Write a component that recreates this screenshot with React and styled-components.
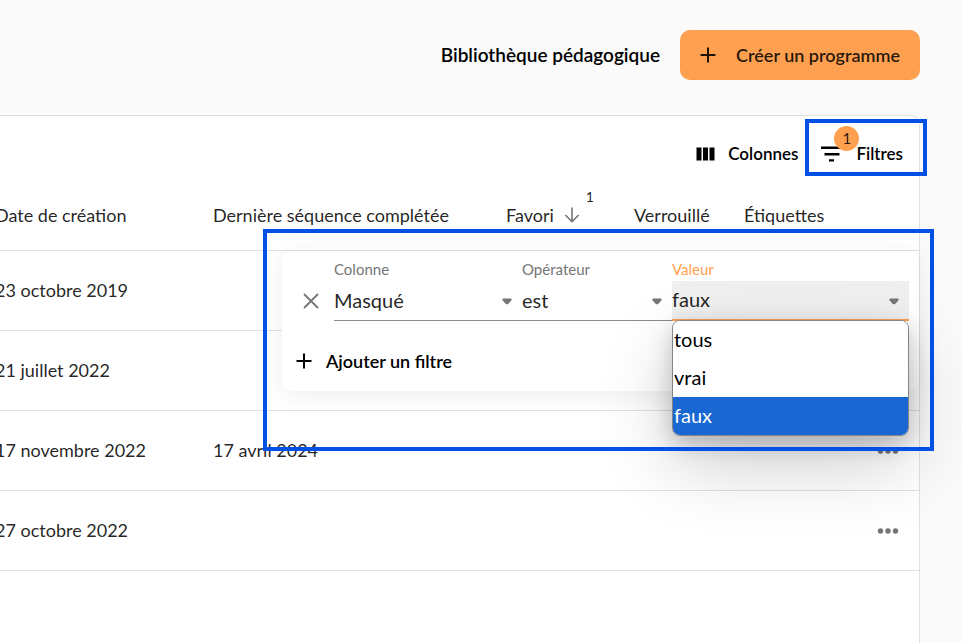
import React, { useState } from "react";
import styled, { createGlobalStyle, css } from "styled-components";

const GlobalStyle = createGlobalStyle`
  * {
    box-sizing: border-box;
  }
  body {
    margin: 0;
    background: #fafafa;
    color: rgba(0, 0, 0, 0.87);
    font-family: Avenir, Lato, "Open Sans", sans-serif;
    font-size: 18px;
    line-height: 24px;
    overflow-x: hidden;
  }
  button,
  select {
    font: inherit;
    color: inherit;
  }
`;

const Page = styled.div`
  display: flex;
  flex-direction: column;
  min-height: 100vh;
  padding: 30px 42px 0 0;
  overflow: hidden;
`;

const TopBar = styled.header`
  display: flex;
  justify-content: flex-end;
  align-items: center;
  gap: 20px;
  margin-bottom: 35px;
`;

const LibraryLink = styled.a`
  color: #000;
  font-size: 19px;
  font-weight: 600;
  text-decoration: none;
`;

const CreateButton = styled.button`
  display: flex;
  align-items: center;
  gap: 20px;
  height: 50px;
  padding: 0 20px 1px;
  border: 0;
  border-radius: 10px;
  background: #ffa050;
  color: rgba(0, 0, 0, 0.87);
  font-weight: 600;
`;

const Card = styled.main`
  flex: 1;
  margin-left: -18px;
  border: 1px solid #e0e0e0;
  border-bottom: 0;
  border-radius: 10px 10px 0 0;
  background: #fff;
`;

const Toolbar = styled.div`
  display: flex;
  justify-content: flex-end;
  gap: 22px;
  height: 66px;
  padding: 16px 16px 0 0;
`;

const ToolButton = styled.button`
  position: relative;
  display: flex;
  align-items: center;
  gap: 13px;
  height: 44px;
  padding: 0 0 1px;
  border: 0;
  background: none;
  color: #000;
  font-size: 17px;
  font-weight: 600;
`;

const Badge = styled.span`
  position: absolute;
  top: -6px;
  left: 14px;
  width: 25px;
  height: 25px;
  border-radius: 50%;
  background: #ffa050;
  color: rgba(0, 0, 0, 0.87);
  font-size: 15px;
  font-weight: 400;
  line-height: 25px;
  text-align: center;
`;

const Highlight = styled.span`
  position: absolute;
  inset: ${({ $inset }) => $inset};
  z-index: 3;
  border: 4px solid #0050e6;
  pointer-events: none;
`;

const GridBody = styled.div`
  position: relative;
`;

const Table = styled.table`
  width: 100%;
  table-layout: fixed;
  border-collapse: separate;
  border-spacing: 0;
`;

const cell = css`
  padding: 0 12px 2px;
  border-bottom: 1px solid #e0e0e0;
  font-weight: 400;
  text-align: left;
  white-space: nowrap;
`;

const HeadCell = styled.th`
  ${cell}
  height: 69px;
  width: ${({ $width }) => $width || "auto"};
`;

const Cell = styled.td`
  ${cell}
  height: 80px;
`;

const SortLabel = styled.span`
  display: flex;
  align-items: center;
  gap: 9px;
`;

const SortIndex = styled.sup`
  align-self: flex-start;
  margin: -16px 0 0 -4px;
  font-size: 14px;
  line-height: 20px;
`;

const MoreButton = styled.button`
  display: flex;
  padding: 2px 4px 0;
  border: 0;
  background: none;
  color: #757575;
`;

const FilterPanel = styled.section`
  position: absolute;
  top: 69px;
  right: 0;
  z-index: 1;
  width: 637px;
  height: 140px;
  padding: 8px 10px 0 14px;
  border-radius: 10px;
  background: #fff;
  box-shadow: 0 4px 24px rgba(0, 0, 0, 0.07);
`;

const FilterRow = styled.div`
  display: grid;
  grid-template-columns: 38px 188px 150px 1fr;
  align-items: end;
`;

const RemoveButton = styled.button`
  display: flex;
  align-items: center;
  height: 40px;
  padding: 0 0 0 7px;
  border: 0;
  background: none;
  color: #757575;
`;

const Field = styled.div`
  position: relative;
  display: flex;
  flex-direction: column;
`;

const FieldLabel = styled.label`
  height: 22px;
  color: ${({ $focused }) => ($focused ? "#ffa050" : "#757575")};
  font-size: 15px;
  line-height: 20px;
`;

const Select = styled.select`
  width: 100%;
  height: 40px;
  padding: 0 0 2px;
  border: 0;
  border-bottom: 1px solid #8c8c8c;
  border-radius: 0;
  outline: 0;
  background: transparent;
  appearance: none;
  font-size: 20px;
  ${({ $focused }) =>
    $focused &&
    css`
      border-bottom: 2px solid #ffa050;
      background: #f0f0f0;
    `}
`;

const Caret = styled.svg`
  position: absolute;
  right: 10px;
  bottom: 16px;
  fill: #757575;
  pointer-events: none;
`;

const Options = styled.ul`
  position: absolute;
  top: 100%;
  left: 0;
  right: 0;
  z-index: 2;
  margin: -1px 0 0;
  padding: 0;
  overflow: hidden;
  border: 1px solid #858585;
  border-radius: 8px;
  background: #fff;
  box-shadow: 0 28px 72px rgba(0, 0, 0, 0.2), 0 8px 22px rgba(0, 0, 0, 0.2);
  list-style: none;
`;

const Option = styled.li`
  height: 38px;
  padding-left: 1px;
  background: ${({ $selected }) => ($selected ? "#1967d2" : "#fff")};
  color: ${({ $selected }) => ($selected ? "#fff" : "#000")};
  font-size: 20px;
  line-height: 37px;
`;

const AddButton = styled.button`
  display: flex;
  align-items: center;
  gap: 14px;
  margin-top: 28px;
  padding: 0;
  border: 0;
  background: none;
  color: #000;
  font-weight: 600;
`;

const PlusIcon = () => (
  <svg width="16" height="16" viewBox="0 0 16 16" aria-hidden="true">
    <path d="M8 0.5v15M0.5 8h15" stroke="currentColor" strokeWidth="2" />
  </svg>
);

const CloseIcon = () => (
  <svg width="16" height="16" viewBox="0 0 16 16" aria-hidden="true">
    <path d="M1.5 1.5l13 13M14.5 1.5l-13 13" stroke="currentColor" strokeWidth="1.8" strokeLinecap="round" />
  </svg>
);

const ColumnsIcon = () => (
  <svg width="19" height="14" viewBox="0 0 19 14" fill="currentColor" aria-hidden="true">
    <path d="M0.5 0.5h5v13h-5zM7 0.5h5v13h-5zM13.5 0.5h5v13h-5z" />
  </svg>
);

const FilterIcon = () => (
  <svg width="23" height="16" viewBox="0 0 23 16" fill="currentColor" aria-hidden="true">
    <path d="M1 0.5h20v2.4H1zM4.5 7h15v2.4h-15zM9 13.2h5v2.3H9z" />
  </svg>
);

const SortIcon = () => (
  <svg width="18" height="18" viewBox="0 0 18 18" fill="none" aria-hidden="true">
    <path d="M9 1.5v14M2.3 9l6.7 6.7L15.7 9" stroke="#757575" strokeWidth="1.6" />
  </svg>
);

const MoreIcon = () => (
  <svg width="22" height="6" viewBox="0 0 22 6" fill="currentColor" aria-hidden="true">
    <circle cx="3.5" cy="3" r="2.7" />
    <circle cx="11" cy="3" r="2.7" />
    <circle cx="18.5" cy="3" r="2.7" />
  </svg>
);

const COLUMNS = [
  { label: "Date de création" },
  { label: "Dernière séquence complétée", width: "293px" },
  { label: "Favori", width: "128px", sort: 1 },
  { label: "Verrouillé", width: "110px" },
  { label: "Étiquettes", width: "129px" },
];

const ROWS = [
  { created: "23 octobre 2019", completed: "" },
  { created: "21 juillet 2022", completed: "" },
  { created: "17 novembre 2022", completed: "17 avril 2024" },
  { created: "27 octobre 2022", completed: "" },
];

const VALUES = ["tous", "vrai", "faux"];

const SelectField = ({ id, label, options, value, onChange, focused, children }) => (
  <Field>
    <FieldLabel htmlFor={id} $focused={focused}>
      {label}
    </FieldLabel>
    <Select id={id} value={value} onChange={onChange} $focused={focused}>
      {options.map((option) => (
        <option key={option}>{option}</option>
      ))}
    </Select>
    <Caret width="10" height="7" viewBox="0 0 10 7" aria-hidden="true">
      <path d="M1.2 0.5h7.6q1.2 0.3 0.9 1.5L6.4 5.7q-1.4 1.2-2.8 0L0.3 2Q0 0.8 1.2 0.5z" />
    </Caret>
    {children}
  </Field>
);

const Filters = () => {
  const [value, setValue] = useState("faux");
  return (
    <FilterPanel>
      <FilterRow>
        <RemoveButton type="button" aria-label="Supprimer">
          <CloseIcon />
        </RemoveButton>
        <SelectField id="column" label="Colonne" options={["Masqué"]} />
        <SelectField id="operator" label="Opérateur" options={["est"]} />
        <SelectField
          id="value"
          label="Valeur"
          options={VALUES}
          value={value}
          onChange={(e) => setValue(e.target.value)}
          focused
        >
          <Options role="listbox" aria-label="Valeur">
            {VALUES.map((item) => (
              <Option
                key={item}
                role="option"
                aria-selected={item === value}
                $selected={item === value}
                onClick={() => setValue(item)}
              >
                {item}
              </Option>
            ))}
          </Options>
        </SelectField>
      </FilterRow>
      <AddButton type="button">
        <PlusIcon />
        Ajouter un filtre
      </AddButton>
      <Highlight $inset="-22px -15px -60px -19px" />
    </FilterPanel>
  );
};

const App = () => (
  <>
    <GlobalStyle />
    <Page>
      <TopBar>
        <LibraryLink href="#bibliotheque">Bibliothèque pédagogique</LibraryLink>
        <CreateButton type="button">
          <PlusIcon />
          Créer un programme
        </CreateButton>
      </TopBar>
      <Card>
        <Toolbar>
          <ToolButton type="button">
            <ColumnsIcon />
            Colonnes
          </ToolButton>
          <ToolButton type="button">
            <FilterIcon />
            Filtres
            <Badge>1</Badge>
            <Highlight $inset="-13px -24px 0 -15px" />
          </ToolButton>
        </Toolbar>
        <GridBody>
          <Table>
            <thead>
              <tr>
                {COLUMNS.map(({ label, width, sort }) => (
                  <HeadCell key={label} $width={width}>
                    {sort ? (
                      <SortLabel>
                        {label}
                        <SortIcon />
                        <SortIndex>{sort}</SortIndex>
                      </SortLabel>
                    ) : (
                      label
                    )}
                  </HeadCell>
                ))}
                <HeadCell $width="58px" aria-label="Actions" />
              </tr>
            </thead>
            <tbody>
              {ROWS.map(({ created, completed }) => (
                <tr key={created}>
                  <Cell>{created}</Cell>
                  <Cell>{completed}</Cell>
                  <Cell />
                  <Cell />
                  <Cell />
                  <Cell>
                    <MoreButton type="button" aria-label="Plus d'actions">
                      <MoreIcon />
                    </MoreButton>
                  </Cell>
                </tr>
              ))}
            </tbody>
          </Table>
          <Filters />
        </GridBody>
      </Card>
    </Page>
  </>
);

export default App;
